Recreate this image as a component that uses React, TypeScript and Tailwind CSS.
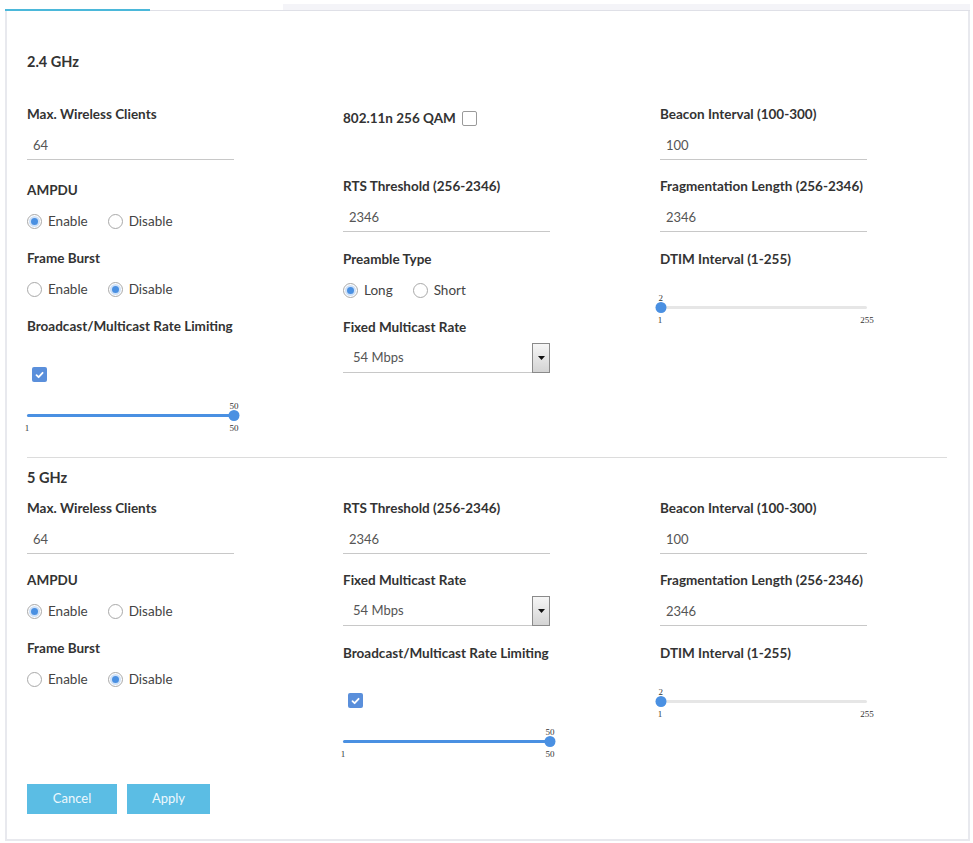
import React from "react";

function Label({ text, className = "" }: { text: string; className?: string }) {
  return (
    <div className={"h-[18px] leading-[18px] text-[13.5px] font-bold text-[#333] whitespace-nowrap " + className}>
      {text}
    </div>
  );
}

function Field({ label, value, className = "" }: { label: string; value: string; className?: string }) {
  return (
    <div className={"flex flex-col " + className}>
      <Label text={label} />
      <input
        readOnly
        value={value}
        className="mt-[7px] h-[30px] w-[207px] border-b border-[#c8c8c8] bg-transparent px-[6px] text-[13px] text-[#555] outline-none"
      />
    </div>
  );
}

function Radio({ checked, text }: { checked: boolean; text: string }) {
  return (
    <div className="flex items-center gap-[6px]">
      <span className="flex h-[15px] w-[15px] items-center justify-center rounded-full border border-[#a9a9a9] bg-white">
        {checked && <span className="h-[7px] w-[7px] rounded-full bg-[#4a90e2] ring-2 ring-[#cfe1f7]" />}
      </span>
      <span className="pt-[1px] text-[13.5px] text-[#444]">{text}</span>
    </div>
  );
}

function RadioGroup({
  label,
  options,
  checked,
  className = "",
}: {
  label: string;
  options: string[];
  checked: number;
  className?: string;
}) {
  return (
    <div className={"flex flex-col " + className}>
      <Label text={label} />
      <div className="mt-[12px] flex h-[20px] items-center gap-[20px]">
        {options.map((o, i) => (
          <Radio key={o} text={o} checked={i === checked} />
        ))}
      </div>
    </div>
  );
}

function CheckBox({ checked, className = "" }: { checked: boolean; className?: string }) {
  if (!checked)
    return <span className={"block h-[15px] w-[15px] rounded-[2px] border border-[#9a9a9a] bg-white " + className} />;
  return (
    <span className={"flex h-[15px] w-[15px] items-center justify-center rounded-[2px] bg-[#5a8fdb] " + className}>
      <svg width="9" height="8" viewBox="0 0 9 8">
        <path d="M1.5 4.2 L3.6 6.2 L7.6 1.8" fill="none" stroke="white" strokeWidth="1.8" strokeLinecap="round" strokeLinejoin="round" />
      </svg>
    </span>
  );
}

function Select({ value, className = "" }: { value: string; className?: string }) {
  return (
    <div className={"flex h-[30px] w-[207px] items-center border-b border-[#c8c8c8] " + className}>
      <span className="flex-1 pl-[10px] text-[13px] text-[#555]">{value}</span>
      <span className="flex h-[30px] w-[18px] items-center justify-center border border-[#8a8a8a] bg-gradient-to-b from-[#f6f6f6] to-[#d4d4d4]">
        <svg width="7" height="4" viewBox="0 0 7 4">
          <polygon points="0,0 7,0 3.5,4" fill="#111" />
        </svg>
      </span>
    </div>
  );
}

function Slider({ value, min, max, className = "" }: { value: number; min: number; max: number; className?: string }) {
  const pct = ((value - min) / (max - min)) * 100;
  const num = "absolute -translate-x-1/2 font-['Liberation_Serif',serif] text-[9px] leading-[10px] text-[#333]";
  return (
    <div className={"relative h-[32px] w-[207px] " + className}>
      <span className={num + " top-0"} style={{ left: pct + "%" }}>
        {value}
      </span>
      <div className="absolute left-0 right-0 top-[13px] h-[3px] rounded-full bg-[#e6e6e6]" />
      <div className="absolute left-0 top-[13px] h-[3px] rounded-full bg-[#4a90e2]" style={{ width: pct + "%" }} />
      <span
        className="absolute top-[9px] h-[11px] w-[11px] -translate-x-1/2 rounded-full bg-[#4a90e2]"
        style={{ left: pct + "%" }}
      />
      <span className={num + " left-0 top-[22px]"}>{min}</span>
      <span className={num + " left-full top-[22px]"}>{max}</span>
    </div>
  );
}

export default function App() {
  return (
    <div className="min-h-screen bg-white pl-[5px] font-['Lato','Liberation_Sans',sans-serif]">
      <div className="w-[965px]">
        {/* tabs */}
        <div className="flex h-[11px] items-end">
          <div className="h-[11px] w-[145px] border-b-2 border-[#4bb8da] bg-white" />
          <div className="h-[11px] w-[133px] border-b border-[#dfe0e7] bg-white" />
          <div className="h-[7px] flex-1 border-b border-[#dfe0e7] bg-[#f4f4f8]" />
        </div>

        <div className="border-x-2 border-b-2 border-[#e8e9ee] pb-[25px] pl-[20px] pr-[21px] pt-[41px]">
          <div className="h-[20px] leading-[20px] text-[14.5px] font-bold text-[#333]">2.4 GHz</div>

          <div className="mt-[33px] grid grid-cols-[316px_317px_1fr]">
            <div className="flex flex-col">
              <Field label="Max. Wireless Clients" value="64" />
              <RadioGroup className="mt-[21px]" label="AMPDU" options={["Enable", "Disable"]} checked={0} />
              <RadioGroup className="mt-[18px]" label="Frame Burst" options={["Enable", "Disable"]} checked={1} />
              <Label className="mt-[18px]" text="Broadcast/Multicast Rate Limiting" />
              <CheckBox className="ml-[5px] mt-[32px]" checked />
              <Slider className="mt-[19px]" value={50} min={1} max={50} />
            </div>
            <div className="flex flex-col">
              <div className="mt-[4px] flex h-[18px] items-center gap-[6px]">
                <span className="text-[13.5px] font-bold text-[#333]">802.11n 256 QAM</span>
                <CheckBox checked={false} />
              </div>
              <Field className="mt-[50px]" label="RTS Threshold (256-2346)" value="2346" />
              <RadioGroup className="mt-[18px]" label="Preamble Type" options={["Long", "Short"]} checked={0} />
              <Label className="mt-[18px]" text="Fixed Multicast Rate" />
              <Select className="mt-[7px]" value="54 Mbps" />
            </div>
            <div className="flex flex-col">
              <Field label="Beacon Interval (100-300)" value="100" />
              <Field className="mt-[17px]" label="Fragmentation Length (256-2346)" value="2346" />
              <Label className="mt-[18px]" text="DTIM Interval (1-255)" />
              <Slider className="mt-[25px]" value={2} min={1} max={255} />
            </div>
          </div>

          <div className="mt-[24px] border-t border-[#dcdcdc]" />

          <div className="mt-[10px] h-[20px] leading-[20px] text-[14.5px] font-bold text-[#333]">5 GHz</div>

          <div className="mt-[11px] grid grid-cols-[316px_317px_1fr]">
            <div className="flex flex-col">
              <Field label="Max. Wireless Clients" value="64" />
              <RadioGroup className="mt-[17px]" label="AMPDU" options={["Enable", "Disable"]} checked={0} />
              <RadioGroup className="mt-[18px]" label="Frame Burst" options={["Enable", "Disable"]} checked={1} />
            </div>
            <div className="flex flex-col">
              <Field label="RTS Threshold (256-2346)" value="2346" />
              <Label className="mt-[17px]" text="Fixed Multicast Rate" />
              <Select className="mt-[7px]" value="54 Mbps" />
              <Label className="mt-[18px]" text="Broadcast/Multicast Rate Limiting" />
              <CheckBox className="ml-[5px] mt-[31px]" checked />
              <Slider className="mt-[19px]" value={50} min={1} max={50} />
            </div>
            <div className="flex flex-col">
              <Field label="Beacon Interval (100-300)" value="100" />
              <Field className="mt-[17px]" label="Fragmentation Length (256-2346)" value="2346" />
              <Label className="mt-[18px]" text="DTIM Interval (1-255)" />
              <Slider className="mt-[25px]" value={2} min={1} max={255} />
            </div>
          </div>

          <div className="mt-[25px] flex gap-[10px]">
            <button className="h-[30px] w-[90px] bg-[#5bbde4] text-[13px] text-[#eef8fd]">Cancel</button>
            <button className="h-[30px] w-[83px] bg-[#5bbde4] text-[13px] text-[#eef8fd]">Apply</button>
          </div>
        </div>
      </div>
    </div>
  );
}
